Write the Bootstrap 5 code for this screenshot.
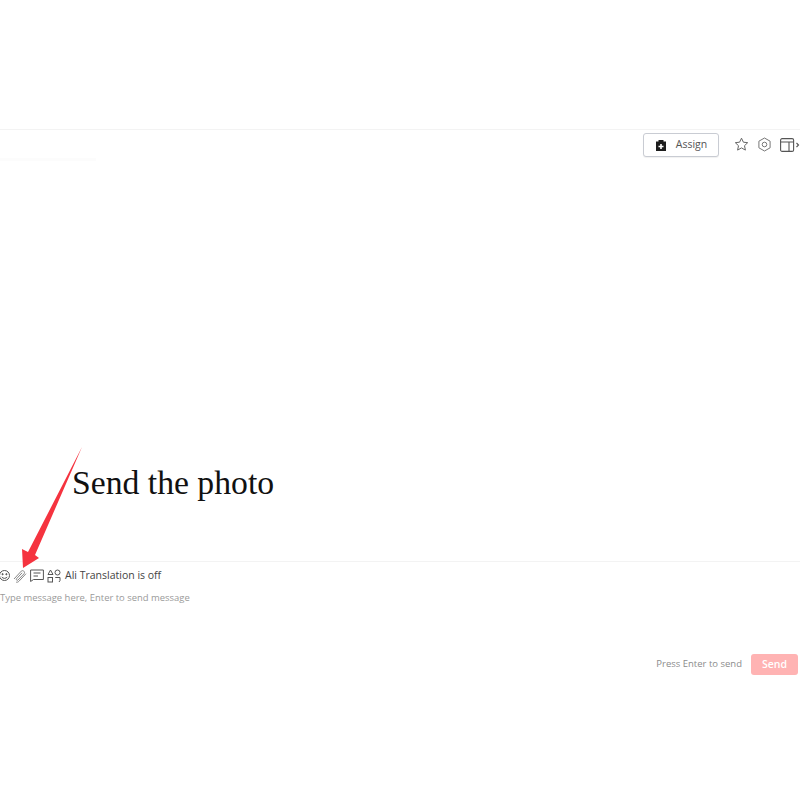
<!DOCTYPE html>
<html lang="en">
<head>
  <meta charset="UTF-8">
  <title>Chat</title>
  <link href="https://cdn.jsdelivr.net/npm/bootstrap@5.3.2/dist/css/bootstrap.min.css" rel="stylesheet">
  <style>
    body { width: 800px; height: 800px; overflow: hidden; background: #fff; font-family: "Open Sans", "Liberation Sans", sans-serif; position: relative; }
    .top-blank { height: 130px; border-bottom: 1px solid #f3f3f3; }
    .chat-head { height: 431px; padding-top: 3px; overflow: hidden; }
    .faint-line { width: 96px; height: 3px; margin-top: 25px; background: #fcfcfc; }
    .assign-btn { width: 76px; height: 24px; margin-right: 15px; padding: 0; font-size: 10.5px; color: #555; background: #fff; border: 1px solid #c9ccd3; border-radius: 3px; gap: 9px; box-shadow: 0 1px 1px rgba(0,0,0,.06); }
    .head-icons { gap: 8px; margin-top: 4px; }
    .head-icons svg { display: block; }
    .chat-input { border-top: 1px solid #f3f3f3; }
    .tool-row { height: 25px; margin-left: -1px; gap: 3px; margin-top: 1px; color: #444; font-size: 10.5px; }
    .tool-row svg { flex: none; display: block; }
    .tool-row span { margin-left: 1px; }
    .hint-text { font-size: 9.45px; color: #9a9a9a; margin-top: 3px; line-height: 14px; }
    .send-row { margin-top: 49px; padding-right: 2px; gap: 9px; }
    .send-hint { font-size: 9.5px; color: #8c8c8c; }
    .send-btn { width: 47px; height: 21px; padding: 0; font-size: 10.5px; font-weight: 600; color: #fff; background: #ffb3b3; border: 0; border-radius: 3px; }
    .note-text { position: absolute; left: 72px; top: 463px; font-family: "Liberation Serif", serif; font-size: 33.7px; line-height: 40px; color: #111; }
    .note-arrow { position: absolute; left: 0; top: 0; }
  </style>
</head>
<body>
  <div class="top-blank"></div>

  <div class="chat-head d-flex justify-content-between align-items-start">
    <div class="faint-line"></div>
    <div class="d-flex align-items-start">
      <button class="assign-btn btn d-flex align-items-center justify-content-center">
        <svg width="12" height="13" viewBox="0 0 12 13"><path fill="#1c1c1c" d="M1 2.500h2.500V1h5v1.500H11V12H1z"/><path fill="#fff" d="M5.200 5h1.600v1.700h1.700v1.600H6.800V10H5.200V8.300H3.500V6.700h1.700z"/></svg>
        Assign
      </button>
      <div class="head-icons d-flex align-items-center">
        <svg width="15" height="15" viewBox="0 0 15 15" fill="none" stroke="#666" stroke-width="1"><path d="M7.500 1.200l1.900 4 4.300.5-3.200 3 .9 4.400-3.900-2.200-3.900 2.200.9-4.400-3.200-3 4.300-.5z"/></svg>
        <svg width="15" height="15" viewBox="0 0 15 15" fill="none" stroke="#777" stroke-width="1"><path d="M7.500 1l5.600 3.200v6.600L7.500 14l-5.600-3.200V4.200z" stroke-linejoin="round"/><circle cx="7.500" cy="7.500" r="2.300"/></svg>
        <svg width="20" height="14" viewBox="0 0 20 14" fill="none" stroke="#555" stroke-width="1.100"><rect x=".6" y=".6" width="13" height="12.800" rx="1.500"/><path d="M.6 4h13M9 4v9.400M16.500 5l2 2-2 2"/></svg>
      </div>
    </div>
  </div>

  <div class="chat-input">
    <div class="tool-row d-flex align-items-center">
      <svg width="11" height="13" viewBox="2 0 11 13" fill="none" stroke="#555" stroke-width="1"><circle cx="7.500" cy="6.500" r="5"/><circle cx="5.600" cy="5.200" r=".6" fill="#555"/><circle cx="9.400" cy="5.200" r=".6" fill="#555"/><path d="M4.800 8c1.200 1.800 4.200 1.800 5.400 0"/></svg>
      <svg width="14" height="14" viewBox="0 0 14 14" fill="none" stroke="#888" stroke-width="1"><path d="M1 10l7.300-7.900c1.500-1.500 4.300.8 2.800 2.600L5 11c-.8.900-2.200-.1-1.500-1.200l5.600-6"/><path d="M3 13c1 .5 2 .2 3-.8l7-7.500"/></svg>
      <svg width="14" height="13" viewBox="0 0 14 13" fill="none" stroke="#555" stroke-width="1"><path d="M.6 1h12.800v9.500H3.500L.6 12.500z"/><path d="M3.500 4h7M3.500 7h4.500"/></svg>
      <svg width="14" height="14" viewBox="0 0 14 14" fill="none" stroke="#555" stroke-width="1"><path d="M1 5.500L3.500 1 6 5.500z"/><circle cx="10.500" cy="3.500" r="2.500"/><rect x="1" y="8.500" width="4.500" height="4.500"/><path d="M8.500 9v-.5h4.500v3l-1 1.500"/></svg>
      <span>Ali Translation is off</span>
    </div>
    <div class="hint-text">Type message here, Enter to send message</div>
    <div class="send-row d-flex justify-content-end align-items-center">
      <span class="send-hint">Press Enter to send</span>
      <button class="send-btn btn">Send</button>
    </div>
  </div>

  <svg class="note-arrow" width="800" height="800" viewBox="0 0 800 800"><polygon fill="#f5333f" points="82,447 35,555 39,558 23,568 22,549 28,552"/></svg>
  <div class="note-text">Send the photo</div>

  <script src="https://cdn.jsdelivr.net/npm/bootstrap@5.3.2/dist/js/bootstrap.bundle.min.js"></script>
</body>
</html>
